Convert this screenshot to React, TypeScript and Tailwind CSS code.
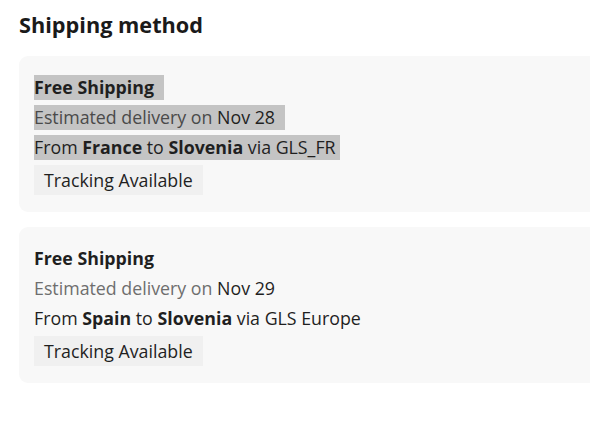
import React from 'react';

type Option = {
  date: string;
  from: string;
  to: string;
  carrier: string;
  selected?: boolean;
};

const options: Option[] = [
  { date: 'Nov 28', from: 'France', to: 'Slovenia', carrier: 'GLS_FR', selected: true },
  { date: 'Nov 29', from: 'Spain', to: 'Slovenia', carrier: 'GLS Europe' },
];

const ShippingCard: React.FC<{ option: Option }> = ({ option }) => {
  const hl = option.selected ? 'bg-[#c4c4c4]' : '';
  return (
    <div className="w-[600px] rounded-[9px] bg-[#f8f8f8] pl-[15px] pt-[19px] pb-[17px]">
      <div className="flex flex-col gap-[5px] text-[17.8px] leading-[25px] text-[#1f1f1f]">
        <div>
          <span className={`inline-block pr-[10px] font-bold ${hl}`}>Free Shipping</span>
        </div>
        <div>
          <span className={`inline-block pr-[10px] ${hl}`}>
            <span className={option.selected ? 'text-[#4a4a4a]' : 'text-[#6e6e6e]'}>Estimated delivery on </span>
            {option.date}
          </span>
        </div>
        <div>
          <span className={`inline-block pr-[4px] ${hl}`}>
            From <b>{option.from}</b> to <b>{option.to}</b> via {option.carrier}
          </span>
        </div>
        <div>
          <span className="inline-block bg-[#f0f0f0] px-[10px] leading-[30px]">Tracking Available</span>
        </div>
      </div>
    </div>
  );
};

const App: React.FC = () => {
  return (
    <div
      className="w-[590px] h-[445px] overflow-hidden bg-white pl-[19px] pt-[10px]"
      style={{ fontFamily: '"Open Sans", "Noto Sans", sans-serif' }}
    >
      <h1 className="text-[21.7px] font-bold leading-[30px] text-[#1a1a1a] mb-[16px]">Shipping method</h1>
      <div className="flex flex-col gap-[15px]">
        {options.map((o) => (
          <ShippingCard key={o.date} option={o} />
        ))}
      </div>
    </div>
  );
};

export default App;
